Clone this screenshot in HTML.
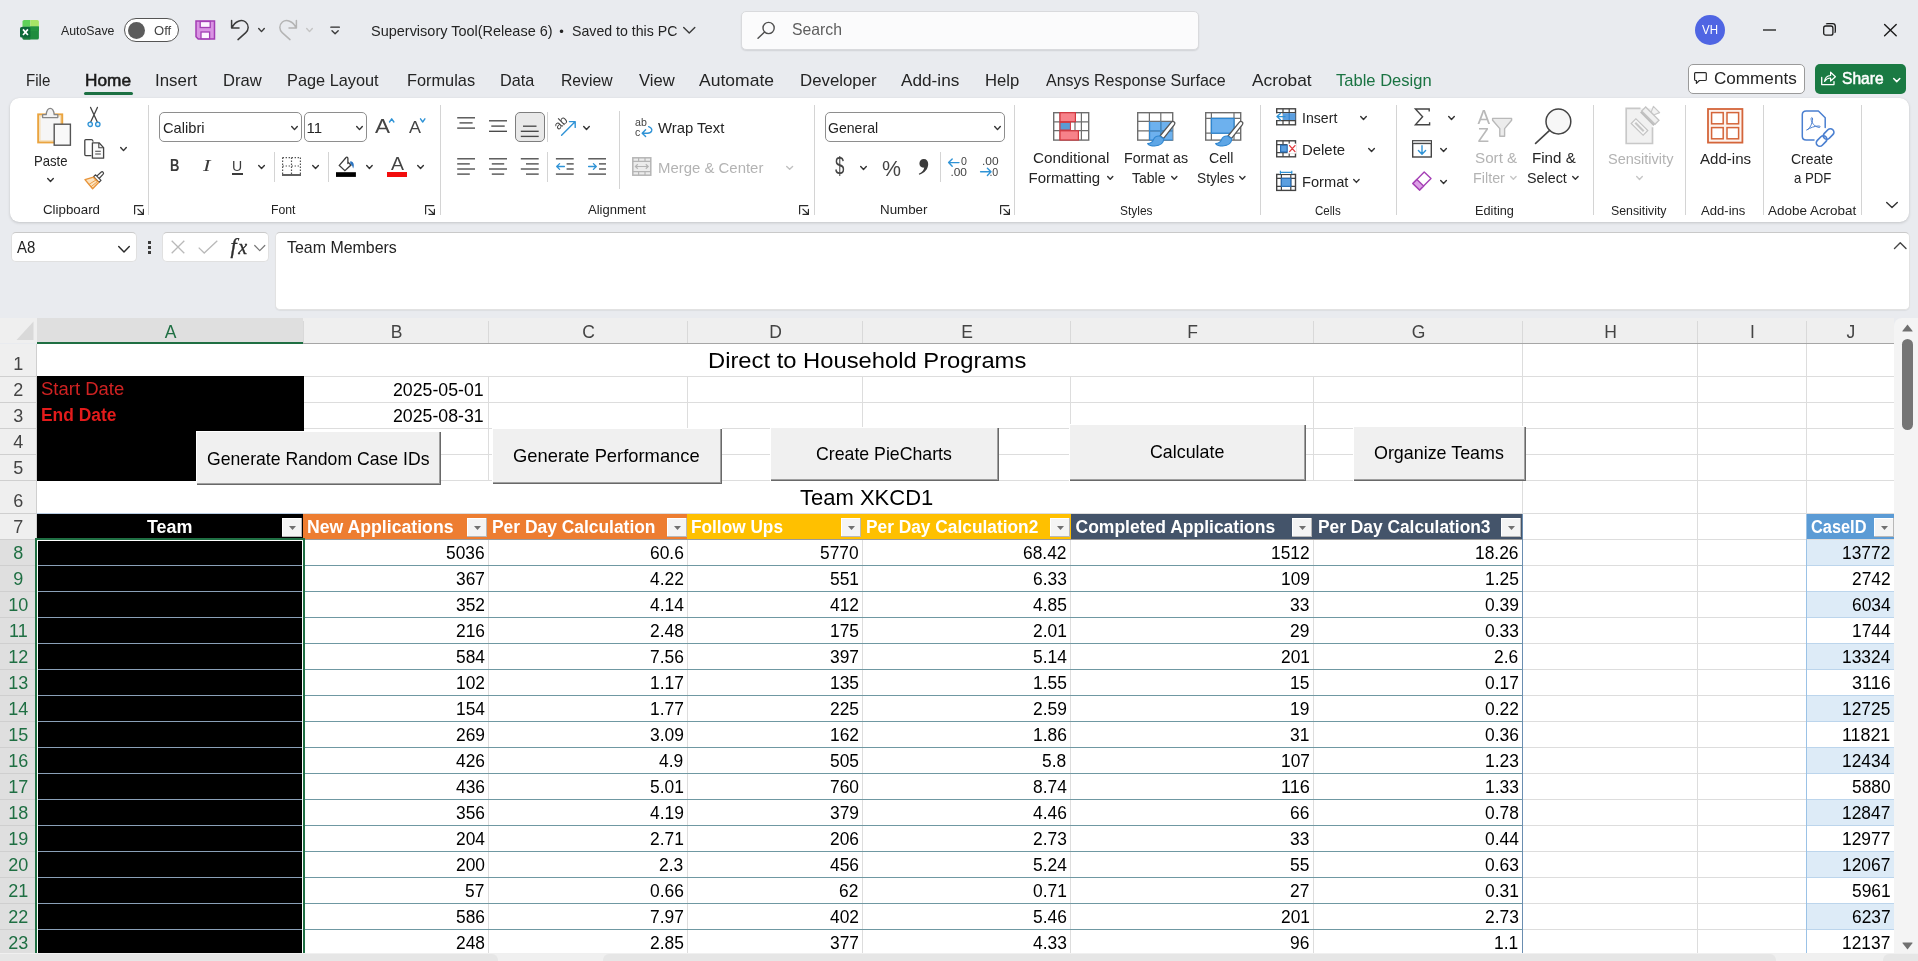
<!DOCTYPE html>
<html><head><meta charset="utf-8"><title>Excel</title>
<style>
html,body{margin:0;padding:0}
body{width:1918px;height:961px;overflow:hidden;position:relative;background:#e9ebef;font-family:"Liberation Sans",sans-serif}
div,span,svg{position:absolute}
span{white-space:pre;line-height:1;transform-origin:0 0}
svg{overflow:visible}
</style></head><body><div id="app" style="left:0;top:0;width:1918px;height:961px;will-change:transform">
<div style="left:0px;top:318px;width:1918px;height:643px;background:#e9ebef;"></div>
<div style="left:1894px;top:318px;width:30px;height:643px;background:#f4f4f4;border-radius:8px 0 0 0;"></div>
<div style="left:37px;top:344px;width:1857px;height:609px;background:#ffffff;"></div>
<div style="left:0px;top:318px;width:1894px;height:25px;background:#efefef;"></div>
<div style="left:37px;top:318px;width:266px;height:24px;background:#dfdfdf;"></div>
<div style="left:37px;top:343px;width:1857px;height:1px;background:#a6a6a6;"></div>
<div style="left:37px;top:342px;width:266px;height:2px;background:#1f6f43;"></div>
<svg style="left:16px;top:321px;" width="18" height="20" viewBox="0 0 18 20"><path d="M17.5 0.5 L17.5 19 L0.5 19 Z" fill="#d9d9d9"/></svg>
<div style="left:303px;top:321px;width:1px;height:22px;background:#d9d9d9;"></div>
<div style="left:488px;top:321px;width:1px;height:22px;background:#d9d9d9;"></div>
<div style="left:687px;top:321px;width:1px;height:22px;background:#d9d9d9;"></div>
<div style="left:862px;top:321px;width:1px;height:22px;background:#d9d9d9;"></div>
<div style="left:1070px;top:321px;width:1px;height:22px;background:#d9d9d9;"></div>
<div style="left:1313px;top:321px;width:1px;height:22px;background:#d9d9d9;"></div>
<div style="left:1522px;top:321px;width:1px;height:22px;background:#d9d9d9;"></div>
<div style="left:1697px;top:321px;width:1px;height:22px;background:#d9d9d9;"></div>
<div style="left:1806px;top:321px;width:1px;height:22px;background:#d9d9d9;"></div>
<span style="left:164.66px;top:324px;font-size:17.5px;color:#1f6f43;">A</span>
<span style="left:390.66px;top:324px;font-size:17.5px;color:#444444;">B</span>
<span style="left:582.18px;top:324px;font-size:17.5px;color:#444444;">C</span>
<span style="left:769.18px;top:324px;font-size:17.5px;color:#444444;">D</span>
<span style="left:961.16px;top:324px;font-size:17.5px;color:#444444;">E</span>
<span style="left:1187.15px;top:324px;font-size:17.5px;color:#444444;">F</span>
<span style="left:1411.69px;top:324px;font-size:17.5px;color:#444444;">G</span>
<span style="left:1604.18px;top:324px;font-size:17.5px;color:#444444;">H</span>
<span style="left:1750.06px;top:324px;font-size:17.5px;color:#444444;">I</span>
<span style="left:1846.62px;top:324px;font-size:17.5px;color:#444444;">J</span>
<div style="left:0px;top:344px;width:36px;height:609px;background:#efefef;"></div>
<div style="left:0px;top:540px;width:36px;height:413px;background:#dfdfdf;"></div>
<div style="left:36px;top:344px;width:1px;height:609px;background:#cfcfcf;"></div>
<div style="left:37px;top:376px;width:1857px;height:1px;background:#dddddd;"></div>
<div style="left:37px;top:402px;width:1857px;height:1px;background:#dddddd;"></div>
<div style="left:37px;top:428px;width:1857px;height:1px;background:#dddddd;"></div>
<div style="left:37px;top:454px;width:1857px;height:1px;background:#dddddd;"></div>
<div style="left:37px;top:480px;width:1857px;height:1px;background:#dddddd;"></div>
<div style="left:37px;top:513px;width:1857px;height:1px;background:#dddddd;"></div>
<div style="left:37px;top:539px;width:1857px;height:1px;background:#dddddd;"></div>
<div style="left:37px;top:565px;width:1857px;height:1px;background:#dddddd;"></div>
<div style="left:37px;top:591px;width:1857px;height:1px;background:#dddddd;"></div>
<div style="left:37px;top:617px;width:1857px;height:1px;background:#dddddd;"></div>
<div style="left:37px;top:643px;width:1857px;height:1px;background:#dddddd;"></div>
<div style="left:37px;top:669px;width:1857px;height:1px;background:#dddddd;"></div>
<div style="left:37px;top:695px;width:1857px;height:1px;background:#dddddd;"></div>
<div style="left:37px;top:721px;width:1857px;height:1px;background:#dddddd;"></div>
<div style="left:37px;top:747px;width:1857px;height:1px;background:#dddddd;"></div>
<div style="left:37px;top:773px;width:1857px;height:1px;background:#dddddd;"></div>
<div style="left:37px;top:799px;width:1857px;height:1px;background:#dddddd;"></div>
<div style="left:37px;top:825px;width:1857px;height:1px;background:#dddddd;"></div>
<div style="left:37px;top:851px;width:1857px;height:1px;background:#dddddd;"></div>
<div style="left:37px;top:877px;width:1857px;height:1px;background:#dddddd;"></div>
<div style="left:37px;top:903px;width:1857px;height:1px;background:#dddddd;"></div>
<div style="left:37px;top:929px;width:1857px;height:1px;background:#dddddd;"></div>
<div style="left:303px;top:344px;width:1px;height:609px;background:#dddddd;"></div>
<div style="left:488px;top:344px;width:1px;height:609px;background:#dddddd;"></div>
<div style="left:687px;top:344px;width:1px;height:609px;background:#dddddd;"></div>
<div style="left:862px;top:344px;width:1px;height:609px;background:#dddddd;"></div>
<div style="left:1070px;top:344px;width:1px;height:609px;background:#dddddd;"></div>
<div style="left:1313px;top:344px;width:1px;height:609px;background:#dddddd;"></div>
<div style="left:1522px;top:344px;width:1px;height:609px;background:#dddddd;"></div>
<div style="left:1697px;top:344px;width:1px;height:609px;background:#dddddd;"></div>
<div style="left:1806px;top:344px;width:1px;height:609px;background:#dddddd;"></div>
<div style="left:0px;top:376px;width:36px;height:1px;background:#cfcfcf;"></div>
<span style="left:13.29px;top:355px;font-size:18px;color:#444444;">1</span>
<div style="left:0px;top:402px;width:36px;height:1px;background:#cfcfcf;"></div>
<span style="left:13.29px;top:381px;font-size:18px;color:#444444;">2</span>
<div style="left:0px;top:428px;width:36px;height:1px;background:#cfcfcf;"></div>
<span style="left:13.29px;top:407px;font-size:18px;color:#444444;">3</span>
<div style="left:0px;top:454px;width:36px;height:1px;background:#cfcfcf;"></div>
<span style="left:13.29px;top:433px;font-size:18px;color:#444444;">4</span>
<div style="left:0px;top:480px;width:36px;height:1px;background:#cfcfcf;"></div>
<span style="left:13.29px;top:459px;font-size:18px;color:#444444;">5</span>
<div style="left:0px;top:513px;width:36px;height:1px;background:#cfcfcf;"></div>
<span style="left:13.29px;top:492px;font-size:18px;color:#444444;">6</span>
<div style="left:0px;top:539px;width:36px;height:1px;background:#cfcfcf;"></div>
<span style="left:13.29px;top:518px;font-size:18px;color:#444444;">7</span>
<div style="left:0px;top:565px;width:36px;height:1px;background:#cfcfcf;"></div>
<span style="left:13.29px;top:544px;font-size:18px;color:#1f6f43;">8</span>
<div style="left:0px;top:591px;width:36px;height:1px;background:#cfcfcf;"></div>
<span style="left:13.29px;top:570px;font-size:18px;color:#1f6f43;">9</span>
<div style="left:0px;top:617px;width:36px;height:1px;background:#cfcfcf;"></div>
<span style="left:8.28px;top:596px;font-size:18px;color:#1f6f43;">10</span>
<div style="left:0px;top:643px;width:36px;height:1px;background:#cfcfcf;"></div>
<span style="left:8.96px;top:622px;font-size:18px;color:#1f6f43;">11</span>
<div style="left:0px;top:669px;width:36px;height:1px;background:#cfcfcf;"></div>
<span style="left:8.28px;top:648px;font-size:18px;color:#1f6f43;">12</span>
<div style="left:0px;top:695px;width:36px;height:1px;background:#cfcfcf;"></div>
<span style="left:8.28px;top:674px;font-size:18px;color:#1f6f43;">13</span>
<div style="left:0px;top:721px;width:36px;height:1px;background:#cfcfcf;"></div>
<span style="left:8.28px;top:700px;font-size:18px;color:#1f6f43;">14</span>
<div style="left:0px;top:747px;width:36px;height:1px;background:#cfcfcf;"></div>
<span style="left:8.28px;top:726px;font-size:18px;color:#1f6f43;">15</span>
<div style="left:0px;top:773px;width:36px;height:1px;background:#cfcfcf;"></div>
<span style="left:8.28px;top:752px;font-size:18px;color:#1f6f43;">16</span>
<div style="left:0px;top:799px;width:36px;height:1px;background:#cfcfcf;"></div>
<span style="left:8.28px;top:778px;font-size:18px;color:#1f6f43;">17</span>
<div style="left:0px;top:825px;width:36px;height:1px;background:#cfcfcf;"></div>
<span style="left:8.28px;top:804px;font-size:18px;color:#1f6f43;">18</span>
<div style="left:0px;top:851px;width:36px;height:1px;background:#cfcfcf;"></div>
<span style="left:8.28px;top:830px;font-size:18px;color:#1f6f43;">19</span>
<div style="left:0px;top:877px;width:36px;height:1px;background:#cfcfcf;"></div>
<span style="left:8.28px;top:856px;font-size:18px;color:#1f6f43;">20</span>
<div style="left:0px;top:903px;width:36px;height:1px;background:#cfcfcf;"></div>
<span style="left:8.28px;top:882px;font-size:18px;color:#1f6f43;">21</span>
<div style="left:0px;top:929px;width:36px;height:1px;background:#cfcfcf;"></div>
<span style="left:8.28px;top:908px;font-size:18px;color:#1f6f43;">22</span>
<span style="left:8.28px;top:934px;font-size:18px;color:#1f6f43;">23</span>
<div style="left:37px;top:344px;width:1485px;height:32px;background:#ffffff;"></div>
<span style="left:707.70px;top:349px;font-size:22.7px;color:#000;transform:scaleX(1.0474);">Direct to Household Programs</span>
<div style="left:37px;top:481px;width:1485px;height:32px;background:#ffffff;"></div>
<span style="left:800.00px;top:486px;font-size:22.7px;color:#000;transform:scaleX(0.9699);">Team XKCD1</span>
<div style="left:37px;top:376px;width:267px;height:105px;background:#000000;"></div>
<span style="left:40.50px;top:381px;font-size:17.5px;color:#cf2222;transform:scaleX(1.0559);">Start Date</span>
<span style="left:41.30px;top:407px;font-size:17.5px;color:#e31b1b;font-weight:700;transform:scaleX(0.9939);">End Date</span>
<span style="left:393.30px;top:382px;font-size:17.5px;color:#000;transform:scaleX(1.0131);">2025-05-01</span>
<span style="left:393.30px;top:408px;font-size:17.5px;color:#000;transform:scaleX(1.0131);">2025-08-31</span>
<div style="left:37px;top:513px;width:266px;height:1px;background:#b9cde3;"></div>
<div style="left:37px;top:514px;width:266px;height:25px;background:#000000;"></div>
<div style="left:303px;top:514px;width:384px;height:25px;background:#ed7d31;"></div>
<div style="left:687px;top:514px;width:384px;height:25px;background:#ffc000;"></div>
<div style="left:1071px;top:514px;width:452px;height:25px;background:#44546a;"></div>
<div style="left:1807px;top:514px;width:87px;height:25px;background:#5b9bd5;"></div>
<span style="left:147.00px;top:519px;font-size:17.5px;color:#fff;font-weight:700;transform:scaleX(1.0243);">Team</span>
<span style="left:307.00px;top:519px;font-size:17.5px;color:#fff;font-weight:700;transform:scaleX(1.0088);">New Applications</span>
<span style="left:492.00px;top:519px;font-size:17.5px;color:#fff;font-weight:700;transform:scaleX(0.9947);">Per Day Calculation</span>
<span style="left:691.00px;top:519px;font-size:17.5px;color:#fff;font-weight:700;transform:scaleX(0.9858);">Follow Ups</span>
<span style="left:865.70px;top:519px;font-size:17.5px;color:#fff;font-weight:700;transform:scaleX(0.9896);">Per Day Calculation2</span>
<span style="left:1075.50px;top:519px;font-size:17.5px;color:#fff;font-weight:700;">Completed Applications</span>
<span style="left:1317.50px;top:519px;font-size:17.5px;color:#fff;font-weight:700;transform:scaleX(0.9908);">Per Day Calculation3</span>
<span style="left:1810.50px;top:519px;font-size:17.5px;color:#fff;font-weight:700;transform:scaleX(0.9352);">CaseID</span>
<div style="left:282px;top:518px;width:20px;height:19px;background:#f4f4f4;box-shadow:inset -1px -1px 0 #b8b8b8, inset 1px 1px 0 #ffffff;"></div>
<svg style="left:288.5px;top:525.5px;" width="7" height="4" viewBox="0 0 7 4"><path d="M0 0 L7 0 L3.5 4 Z" fill="#707070"/></svg>
<div style="left:467px;top:518px;width:20px;height:19px;background:#f4f4f4;box-shadow:inset -1px -1px 0 #b8b8b8, inset 1px 1px 0 #ffffff;"></div>
<svg style="left:473.5px;top:525.5px;" width="7" height="4" viewBox="0 0 7 4"><path d="M0 0 L7 0 L3.5 4 Z" fill="#707070"/></svg>
<div style="left:667px;top:518px;width:20px;height:19px;background:#f4f4f4;box-shadow:inset -1px -1px 0 #b8b8b8, inset 1px 1px 0 #ffffff;"></div>
<svg style="left:673.5px;top:525.5px;" width="7" height="4" viewBox="0 0 7 4"><path d="M0 0 L7 0 L3.5 4 Z" fill="#707070"/></svg>
<div style="left:841px;top:518px;width:20px;height:19px;background:#f4f4f4;box-shadow:inset -1px -1px 0 #b8b8b8, inset 1px 1px 0 #ffffff;"></div>
<svg style="left:847.5px;top:525.5px;" width="7" height="4" viewBox="0 0 7 4"><path d="M0 0 L7 0 L3.5 4 Z" fill="#707070"/></svg>
<div style="left:1050px;top:518px;width:20px;height:19px;background:#f4f4f4;box-shadow:inset -1px -1px 0 #b8b8b8, inset 1px 1px 0 #ffffff;"></div>
<svg style="left:1056.5px;top:525.5px;" width="7" height="4" viewBox="0 0 7 4"><path d="M0 0 L7 0 L3.5 4 Z" fill="#707070"/></svg>
<div style="left:1292px;top:518px;width:20px;height:19px;background:#f4f4f4;box-shadow:inset -1px -1px 0 #b8b8b8, inset 1px 1px 0 #ffffff;"></div>
<svg style="left:1298.5px;top:525.5px;" width="7" height="4" viewBox="0 0 7 4"><path d="M0 0 L7 0 L3.5 4 Z" fill="#707070"/></svg>
<div style="left:1501px;top:518px;width:20px;height:19px;background:#f4f4f4;box-shadow:inset -1px -1px 0 #b8b8b8, inset 1px 1px 0 #ffffff;"></div>
<svg style="left:1507.5px;top:525.5px;" width="7" height="4" viewBox="0 0 7 4"><path d="M0 0 L7 0 L3.5 4 Z" fill="#707070"/></svg>
<div style="left:1874px;top:518px;width:20px;height:19px;background:#f4f4f4;box-shadow:inset -1px -1px 0 #b8b8b8, inset 1px 1px 0 #ffffff;"></div>
<svg style="left:1880.5px;top:525.5px;" width="7" height="4" viewBox="0 0 7 4"><path d="M0 0 L7 0 L3.5 4 Z" fill="#707070"/></svg>
<div style="left:1807px;top:540px;width:87px;height:25px;background:#ddebf7;"></div>
<div style="left:1807px;top:592px;width:87px;height:25px;background:#ddebf7;"></div>
<div style="left:1807px;top:644px;width:87px;height:25px;background:#ddebf7;"></div>
<div style="left:1807px;top:696px;width:87px;height:25px;background:#ddebf7;"></div>
<div style="left:1807px;top:748px;width:87px;height:25px;background:#ddebf7;"></div>
<div style="left:1807px;top:800px;width:87px;height:25px;background:#ddebf7;"></div>
<div style="left:1807px;top:852px;width:87px;height:25px;background:#ddebf7;"></div>
<div style="left:1807px;top:904px;width:87px;height:25px;background:#ddebf7;"></div>
<div style="left:37px;top:540px;width:266px;height:413px;background:#000000;"></div>
<div style="left:304px;top:565px;width:1218px;height:1px;background:#6f98a2;"></div>
<div style="left:37px;top:565px;width:266px;height:1px;background:#8aa0b8;"></div>
<div style="left:1807px;top:565px;width:87px;height:1px;background:#bcd5ec;"></div>
<div style="left:304px;top:591px;width:1218px;height:1px;background:#6f98a2;"></div>
<div style="left:37px;top:591px;width:266px;height:1px;background:#8aa0b8;"></div>
<div style="left:1807px;top:591px;width:87px;height:1px;background:#bcd5ec;"></div>
<div style="left:304px;top:617px;width:1218px;height:1px;background:#6f98a2;"></div>
<div style="left:37px;top:617px;width:266px;height:1px;background:#8aa0b8;"></div>
<div style="left:1807px;top:617px;width:87px;height:1px;background:#bcd5ec;"></div>
<div style="left:304px;top:643px;width:1218px;height:1px;background:#6f98a2;"></div>
<div style="left:37px;top:643px;width:266px;height:1px;background:#8aa0b8;"></div>
<div style="left:1807px;top:643px;width:87px;height:1px;background:#bcd5ec;"></div>
<div style="left:304px;top:669px;width:1218px;height:1px;background:#6f98a2;"></div>
<div style="left:37px;top:669px;width:266px;height:1px;background:#8aa0b8;"></div>
<div style="left:1807px;top:669px;width:87px;height:1px;background:#bcd5ec;"></div>
<div style="left:304px;top:695px;width:1218px;height:1px;background:#6f98a2;"></div>
<div style="left:37px;top:695px;width:266px;height:1px;background:#8aa0b8;"></div>
<div style="left:1807px;top:695px;width:87px;height:1px;background:#bcd5ec;"></div>
<div style="left:304px;top:721px;width:1218px;height:1px;background:#6f98a2;"></div>
<div style="left:37px;top:721px;width:266px;height:1px;background:#8aa0b8;"></div>
<div style="left:1807px;top:721px;width:87px;height:1px;background:#bcd5ec;"></div>
<div style="left:304px;top:747px;width:1218px;height:1px;background:#6f98a2;"></div>
<div style="left:37px;top:747px;width:266px;height:1px;background:#8aa0b8;"></div>
<div style="left:1807px;top:747px;width:87px;height:1px;background:#bcd5ec;"></div>
<div style="left:304px;top:773px;width:1218px;height:1px;background:#6f98a2;"></div>
<div style="left:37px;top:773px;width:266px;height:1px;background:#8aa0b8;"></div>
<div style="left:1807px;top:773px;width:87px;height:1px;background:#bcd5ec;"></div>
<div style="left:304px;top:799px;width:1218px;height:1px;background:#6f98a2;"></div>
<div style="left:37px;top:799px;width:266px;height:1px;background:#8aa0b8;"></div>
<div style="left:1807px;top:799px;width:87px;height:1px;background:#bcd5ec;"></div>
<div style="left:304px;top:825px;width:1218px;height:1px;background:#6f98a2;"></div>
<div style="left:37px;top:825px;width:266px;height:1px;background:#8aa0b8;"></div>
<div style="left:1807px;top:825px;width:87px;height:1px;background:#bcd5ec;"></div>
<div style="left:304px;top:851px;width:1218px;height:1px;background:#6f98a2;"></div>
<div style="left:37px;top:851px;width:266px;height:1px;background:#8aa0b8;"></div>
<div style="left:1807px;top:851px;width:87px;height:1px;background:#bcd5ec;"></div>
<div style="left:304px;top:877px;width:1218px;height:1px;background:#6f98a2;"></div>
<div style="left:37px;top:877px;width:266px;height:1px;background:#8aa0b8;"></div>
<div style="left:1807px;top:877px;width:87px;height:1px;background:#bcd5ec;"></div>
<div style="left:304px;top:903px;width:1218px;height:1px;background:#6f98a2;"></div>
<div style="left:37px;top:903px;width:266px;height:1px;background:#8aa0b8;"></div>
<div style="left:1807px;top:903px;width:87px;height:1px;background:#bcd5ec;"></div>
<div style="left:304px;top:929px;width:1218px;height:1px;background:#6f98a2;"></div>
<div style="left:37px;top:929px;width:266px;height:1px;background:#8aa0b8;"></div>
<div style="left:1807px;top:929px;width:87px;height:1px;background:#bcd5ec;"></div>
<div style="left:1522px;top:514px;width:1px;height:439px;background:#6a8db0;"></div>
<div style="left:1806px;top:514px;width:1px;height:439px;background:#9bc2e6;"></div>
<div style="left:304px;top:539px;width:1218px;height:1px;background:#9a9a9a;"></div>
<span style="left:445.86px;top:545px;font-size:17.5px;color:#000;transform:scaleX(0.9924);">5036</span>
<span style="left:649.62px;top:545px;font-size:17.5px;color:#000;transform:scaleX(0.9946);">60.6</span>
<span style="left:819.86px;top:545px;font-size:17.5px;color:#000;transform:scaleX(0.9924);">5770</span>
<span style="left:1022.96px;top:545px;font-size:17.5px;color:#000;transform:scaleX(0.9941);">68.42</span>
<span style="left:1270.86px;top:545px;font-size:17.5px;color:#000;transform:scaleX(0.9924);">1512</span>
<span style="left:1474.96px;top:545px;font-size:17.5px;color:#000;transform:scaleX(0.9941);">18.26</span>
<span style="left:1842.20px;top:545px;font-size:17.5px;color:#000;transform:scaleX(0.9924);">13772</span>
<span style="left:455.52px;top:571px;font-size:17.5px;color:#000;transform:scaleX(0.9924);">367</span>
<span style="left:649.62px;top:571px;font-size:17.5px;color:#000;transform:scaleX(0.9946);">4.22</span>
<span style="left:829.52px;top:571px;font-size:17.5px;color:#000;transform:scaleX(0.9924);">551</span>
<span style="left:1032.62px;top:571px;font-size:17.5px;color:#000;transform:scaleX(0.9946);">6.33</span>
<span style="left:1280.52px;top:571px;font-size:17.5px;color:#000;transform:scaleX(0.9924);">109</span>
<span style="left:1484.62px;top:571px;font-size:17.5px;color:#000;transform:scaleX(0.9946);">1.25</span>
<span style="left:1851.86px;top:571px;font-size:17.5px;color:#000;transform:scaleX(0.9924);">2742</span>
<span style="left:455.52px;top:597px;font-size:17.5px;color:#000;transform:scaleX(0.9924);">352</span>
<span style="left:649.62px;top:597px;font-size:17.5px;color:#000;transform:scaleX(0.9946);">4.14</span>
<span style="left:829.52px;top:597px;font-size:17.5px;color:#000;transform:scaleX(0.9924);">412</span>
<span style="left:1032.62px;top:597px;font-size:17.5px;color:#000;transform:scaleX(0.9946);">4.85</span>
<span style="left:1290.18px;top:597px;font-size:17.5px;color:#000;transform:scaleX(0.9924);">33</span>
<span style="left:1484.62px;top:597px;font-size:17.5px;color:#000;transform:scaleX(0.9946);">0.39</span>
<span style="left:1851.86px;top:597px;font-size:17.5px;color:#000;transform:scaleX(0.9924);">6034</span>
<span style="left:455.52px;top:623px;font-size:17.5px;color:#000;transform:scaleX(0.9924);">216</span>
<span style="left:649.62px;top:623px;font-size:17.5px;color:#000;transform:scaleX(0.9946);">2.48</span>
<span style="left:829.52px;top:623px;font-size:17.5px;color:#000;transform:scaleX(0.9924);">175</span>
<span style="left:1032.62px;top:623px;font-size:17.5px;color:#000;transform:scaleX(0.9946);">2.01</span>
<span style="left:1290.18px;top:623px;font-size:17.5px;color:#000;transform:scaleX(0.9924);">29</span>
<span style="left:1484.62px;top:623px;font-size:17.5px;color:#000;transform:scaleX(0.9946);">0.33</span>
<span style="left:1851.86px;top:623px;font-size:17.5px;color:#000;transform:scaleX(0.9924);">1744</span>
<span style="left:455.52px;top:649px;font-size:17.5px;color:#000;transform:scaleX(0.9924);">584</span>
<span style="left:649.62px;top:649px;font-size:17.5px;color:#000;transform:scaleX(0.9946);">7.56</span>
<span style="left:829.52px;top:649px;font-size:17.5px;color:#000;transform:scaleX(0.9924);">397</span>
<span style="left:1032.62px;top:649px;font-size:17.5px;color:#000;transform:scaleX(0.9946);">5.14</span>
<span style="left:1280.52px;top:649px;font-size:17.5px;color:#000;transform:scaleX(0.9924);">201</span>
<span style="left:1494.28px;top:649px;font-size:17.5px;color:#000;transform:scaleX(0.9956);">2.6</span>
<span style="left:1842.20px;top:649px;font-size:17.5px;color:#000;transform:scaleX(0.9924);">13324</span>
<span style="left:455.52px;top:675px;font-size:17.5px;color:#000;transform:scaleX(0.9924);">102</span>
<span style="left:649.62px;top:675px;font-size:17.5px;color:#000;transform:scaleX(0.9946);">1.17</span>
<span style="left:829.52px;top:675px;font-size:17.5px;color:#000;transform:scaleX(0.9924);">135</span>
<span style="left:1032.62px;top:675px;font-size:17.5px;color:#000;transform:scaleX(0.9946);">1.55</span>
<span style="left:1290.18px;top:675px;font-size:17.5px;color:#000;transform:scaleX(0.9924);">15</span>
<span style="left:1484.62px;top:675px;font-size:17.5px;color:#000;transform:scaleX(0.9946);">0.17</span>
<span style="left:1851.86px;top:675px;font-size:17.5px;color:#000;transform:scaleX(1.0266);">3116</span>
<span style="left:455.52px;top:701px;font-size:17.5px;color:#000;transform:scaleX(0.9924);">154</span>
<span style="left:649.62px;top:701px;font-size:17.5px;color:#000;transform:scaleX(0.9946);">1.77</span>
<span style="left:829.52px;top:701px;font-size:17.5px;color:#000;transform:scaleX(0.9924);">225</span>
<span style="left:1032.62px;top:701px;font-size:17.5px;color:#000;transform:scaleX(0.9946);">2.59</span>
<span style="left:1290.18px;top:701px;font-size:17.5px;color:#000;transform:scaleX(0.9924);">19</span>
<span style="left:1484.62px;top:701px;font-size:17.5px;color:#000;transform:scaleX(0.9946);">0.22</span>
<span style="left:1842.20px;top:701px;font-size:17.5px;color:#000;transform:scaleX(0.9924);">12725</span>
<span style="left:455.52px;top:727px;font-size:17.5px;color:#000;transform:scaleX(0.9924);">269</span>
<span style="left:649.62px;top:727px;font-size:17.5px;color:#000;transform:scaleX(0.9946);">3.09</span>
<span style="left:829.52px;top:727px;font-size:17.5px;color:#000;transform:scaleX(0.9924);">162</span>
<span style="left:1032.62px;top:727px;font-size:17.5px;color:#000;transform:scaleX(0.9946);">1.86</span>
<span style="left:1290.18px;top:727px;font-size:17.5px;color:#000;transform:scaleX(0.9924);">31</span>
<span style="left:1484.62px;top:727px;font-size:17.5px;color:#000;transform:scaleX(0.9946);">0.36</span>
<span style="left:1842.20px;top:727px;font-size:17.5px;color:#000;transform:scaleX(1.0195);">11821</span>
<span style="left:455.52px;top:753px;font-size:17.5px;color:#000;transform:scaleX(0.9924);">426</span>
<span style="left:659.28px;top:753px;font-size:17.5px;color:#000;transform:scaleX(0.9956);">4.9</span>
<span style="left:829.52px;top:753px;font-size:17.5px;color:#000;transform:scaleX(0.9924);">505</span>
<span style="left:1042.28px;top:753px;font-size:17.5px;color:#000;transform:scaleX(0.9956);">5.8</span>
<span style="left:1280.52px;top:753px;font-size:17.5px;color:#000;transform:scaleX(0.9924);">107</span>
<span style="left:1484.62px;top:753px;font-size:17.5px;color:#000;transform:scaleX(0.9946);">1.23</span>
<span style="left:1842.20px;top:753px;font-size:17.5px;color:#000;transform:scaleX(0.9924);">12434</span>
<span style="left:455.52px;top:779px;font-size:17.5px;color:#000;transform:scaleX(0.9924);">436</span>
<span style="left:649.62px;top:779px;font-size:17.5px;color:#000;transform:scaleX(0.9946);">5.01</span>
<span style="left:829.52px;top:779px;font-size:17.5px;color:#000;transform:scaleX(0.9924);">760</span>
<span style="left:1032.62px;top:779px;font-size:17.5px;color:#000;transform:scaleX(0.9946);">8.74</span>
<span style="left:1280.52px;top:779px;font-size:17.5px;color:#000;transform:scaleX(1.0385);">116</span>
<span style="left:1484.62px;top:779px;font-size:17.5px;color:#000;transform:scaleX(0.9946);">1.33</span>
<span style="left:1851.86px;top:779px;font-size:17.5px;color:#000;transform:scaleX(0.9924);">5880</span>
<span style="left:455.52px;top:805px;font-size:17.5px;color:#000;transform:scaleX(0.9924);">356</span>
<span style="left:649.62px;top:805px;font-size:17.5px;color:#000;transform:scaleX(0.9946);">4.19</span>
<span style="left:829.52px;top:805px;font-size:17.5px;color:#000;transform:scaleX(0.9924);">379</span>
<span style="left:1032.62px;top:805px;font-size:17.5px;color:#000;transform:scaleX(0.9946);">4.46</span>
<span style="left:1290.18px;top:805px;font-size:17.5px;color:#000;transform:scaleX(0.9924);">66</span>
<span style="left:1484.62px;top:805px;font-size:17.5px;color:#000;transform:scaleX(0.9946);">0.78</span>
<span style="left:1842.20px;top:805px;font-size:17.5px;color:#000;transform:scaleX(0.9924);">12847</span>
<span style="left:455.52px;top:831px;font-size:17.5px;color:#000;transform:scaleX(0.9924);">204</span>
<span style="left:649.62px;top:831px;font-size:17.5px;color:#000;transform:scaleX(0.9946);">2.71</span>
<span style="left:829.52px;top:831px;font-size:17.5px;color:#000;transform:scaleX(0.9924);">206</span>
<span style="left:1032.62px;top:831px;font-size:17.5px;color:#000;transform:scaleX(0.9946);">2.73</span>
<span style="left:1290.18px;top:831px;font-size:17.5px;color:#000;transform:scaleX(0.9924);">33</span>
<span style="left:1484.62px;top:831px;font-size:17.5px;color:#000;transform:scaleX(0.9946);">0.44</span>
<span style="left:1842.20px;top:831px;font-size:17.5px;color:#000;transform:scaleX(0.9924);">12977</span>
<span style="left:455.52px;top:857px;font-size:17.5px;color:#000;transform:scaleX(0.9924);">200</span>
<span style="left:659.28px;top:857px;font-size:17.5px;color:#000;transform:scaleX(0.9956);">2.3</span>
<span style="left:829.52px;top:857px;font-size:17.5px;color:#000;transform:scaleX(0.9924);">456</span>
<span style="left:1032.62px;top:857px;font-size:17.5px;color:#000;transform:scaleX(0.9946);">5.24</span>
<span style="left:1290.18px;top:857px;font-size:17.5px;color:#000;transform:scaleX(0.9924);">55</span>
<span style="left:1484.62px;top:857px;font-size:17.5px;color:#000;transform:scaleX(0.9946);">0.63</span>
<span style="left:1842.20px;top:857px;font-size:17.5px;color:#000;transform:scaleX(0.9924);">12067</span>
<span style="left:465.18px;top:883px;font-size:17.5px;color:#000;transform:scaleX(0.9924);">57</span>
<span style="left:649.62px;top:883px;font-size:17.5px;color:#000;transform:scaleX(0.9946);">0.66</span>
<span style="left:839.18px;top:883px;font-size:17.5px;color:#000;transform:scaleX(0.9924);">62</span>
<span style="left:1032.62px;top:883px;font-size:17.5px;color:#000;transform:scaleX(0.9946);">0.71</span>
<span style="left:1290.18px;top:883px;font-size:17.5px;color:#000;transform:scaleX(0.9924);">27</span>
<span style="left:1484.62px;top:883px;font-size:17.5px;color:#000;transform:scaleX(0.9946);">0.31</span>
<span style="left:1851.86px;top:883px;font-size:17.5px;color:#000;transform:scaleX(0.9924);">5961</span>
<span style="left:455.52px;top:909px;font-size:17.5px;color:#000;transform:scaleX(0.9924);">586</span>
<span style="left:649.62px;top:909px;font-size:17.5px;color:#000;transform:scaleX(0.9946);">7.97</span>
<span style="left:829.52px;top:909px;font-size:17.5px;color:#000;transform:scaleX(0.9924);">402</span>
<span style="left:1032.62px;top:909px;font-size:17.5px;color:#000;transform:scaleX(0.9946);">5.46</span>
<span style="left:1280.52px;top:909px;font-size:17.5px;color:#000;transform:scaleX(0.9924);">201</span>
<span style="left:1484.62px;top:909px;font-size:17.5px;color:#000;transform:scaleX(0.9946);">2.73</span>
<span style="left:1851.86px;top:909px;font-size:17.5px;color:#000;transform:scaleX(0.9924);">6237</span>
<span style="left:455.52px;top:935px;font-size:17.5px;color:#000;transform:scaleX(0.9924);">248</span>
<span style="left:649.62px;top:935px;font-size:17.5px;color:#000;transform:scaleX(0.9946);">2.85</span>
<span style="left:829.52px;top:935px;font-size:17.5px;color:#000;transform:scaleX(0.9924);">377</span>
<span style="left:1032.62px;top:935px;font-size:17.5px;color:#000;transform:scaleX(0.9946);">4.33</span>
<span style="left:1290.18px;top:935px;font-size:17.5px;color:#000;transform:scaleX(0.9924);">96</span>
<span style="left:1494.28px;top:935px;font-size:17.5px;color:#000;transform:scaleX(0.9956);">1.1</span>
<span style="left:1842.20px;top:935px;font-size:17.5px;color:#000;transform:scaleX(0.9924);">12137</span>
<div style="left:35px;top:538px;width:270px;height:420px;border:2px solid #1f6f43;box-sizing:border-box;"></div>
<div style="left:37px;top:540px;width:266px;height:416px;border:1px solid #fff;box-sizing:border-box;"></div>
<div style="left:196px;top:431px;width:245px;height:54px;background:#f0f0f0;box-shadow:inset 1px 1px 0 #ffffff, inset -1px -1px 0 #696969, inset -2px -2px 0 #a0a0a0;"></div>
<span style="left:207.00px;top:449px;font-size:19px;color:#000;transform:scaleX(0.9281);">Generate Random Case IDs</span>
<div style="left:492px;top:428px;width:230px;height:56px;background:#f0f0f0;box-shadow:inset 1px 1px 0 #ffffff, inset -1px -1px 0 #696969, inset -2px -2px 0 #a0a0a0;"></div>
<span style="left:513.30px;top:446px;font-size:19px;color:#000;transform:scaleX(0.9660);">Generate Performance</span>
<div style="left:770px;top:427px;width:229px;height:54px;background:#f0f0f0;box-shadow:inset 1px 1px 0 #ffffff, inset -1px -1px 0 #696969, inset -2px -2px 0 #a0a0a0;"></div>
<span style="left:815.80px;top:444px;font-size:19px;color:#000;transform:scaleX(0.9325);">Create PieCharts</span>
<div style="left:1069px;top:424px;width:237px;height:57px;background:#f0f0f0;box-shadow:inset 1px 1px 0 #ffffff, inset -1px -1px 0 #696969, inset -2px -2px 0 #a0a0a0;"></div>
<span style="left:1149.70px;top:442px;font-size:19px;color:#000;transform:scaleX(0.9379);">Calculate</span>
<div style="left:1353px;top:426px;width:173px;height:55px;background:#f0f0f0;box-shadow:inset 1px 1px 0 #ffffff, inset -1px -1px 0 #696969, inset -2px -2px 0 #a0a0a0;"></div>
<span style="left:1373.80px;top:443px;font-size:19px;color:#000;transform:scaleX(0.9413);">Organize Teams</span>
<svg style="left:1902px;top:324px;" width="11" height="8" viewBox="0 0 11 8"><path d="M5.5 0.5 L10.6 7 Q10.8 7.6 10 7.6 L1 7.6 Q0.2 7.6 0.4 7 Z" fill="#707070"/></svg>
<div style="left:1902px;top:339px;width:11px;height:91px;background:#757575;border-radius:5.5px;"></div>
<svg style="left:1902px;top:942px;" width="11" height="8" viewBox="0 0 11 8"><path d="M5.5 7.5 L10.6 1 Q10.8 0.4 10 0.4 L1 0.4 Q0.2 0.4 0.4 1 Z" fill="#707070"/></svg>
<div style="left:0px;top:953px;width:1918px;height:8px;background:#f0f0f0;"></div>
<div style="left:-8px;top:953.5px;width:506px;height:20px;background:#e6e6e6;border-radius:6px;"></div>
<div style="left:603px;top:953.5px;width:1173px;height:20px;background:#e6e6e6;border-radius:6px;"></div>
<div style="left:1883px;top:953.5px;width:50px;height:20px;background:#e6e6e6;border-radius:6px;"></div>
<svg style="left:20px;top:20px;" width="19" height="20" viewBox="0 0 19 20">
<path d="M2.5 6.8 V1.6 Q2.5 0 4.1 0 H10.3 V6.8 Z" fill="#5fd15a"/>
<path d="M10.3 0 H17.3 Q18.9 0 18.9 1.6 V6.8 H10.3 Z" fill="#a8e566"/>
<path d="M2.5 6.6 H18.9 V18 Q18.9 19.6 17.3 19.6 H4.1 Q2.5 19.6 2.5 18 Z" fill="#1f8c3d"/>
<path d="M10.3 6.6 H18.9 V11 H10.3 Z" fill="#23943f"/>
<path d="M2.5 15 H10.3 V19.6 H4.1 Q2.5 19.6 2.5 18 Z" fill="#18793a"/>
<rect x="0" y="6.9" width="10.3" height="10.6" rx="1.6" fill="#0d6838"/>
<path d="M3 9.4 L7.9 15 M7.9 9.4 L3 15" stroke="#fff" stroke-width="1.7"/></svg>
<span style="left:61.00px;top:24px;font-size:13px;color:#242424;transform:scaleX(0.9472);">AutoSave</span>
<div style="left:124px;top:17.5px;width:55px;height:24px;background:#fff;border:1px solid #555;border-radius:12.5px;box-sizing:border-box;"></div>
<div style="left:128px;top:21.5px;width:17px;height:17px;background:#5c5c5c;border-radius:9px;"></div>
<span style="left:153.50px;top:24px;font-size:13px;color:#444;transform:scaleX(1.0053);">Off</span>
<svg style="left:194.5px;top:20px;" width="21" height="20" viewBox="0 0 21 20"><path d="M1 1 H19.5 V19 H3.2 L1 16.8 Z" fill="#d993e3" stroke="#a23db4" stroke-width="1.5" stroke-linejoin="miter"/>
<rect x="5.2" y="1.5" width="10" height="6" fill="#fdf3ff" stroke="#a23db4" stroke-width="1.3"/>
<rect x="6" y="12" width="8.6" height="6.8" fill="#fdf3ff" stroke="#a23db4" stroke-width="1.3"/></svg>
<svg style="left:230px;top:18px;" width="20" height="23" viewBox="0 0 20 23"><path d="M1.6 2.6 V10 H9 M2 9.6 C5 3.2 11.5 0.8 15.6 4 C19.4 7.2 18.6 12 15.8 14.6 L8 21.6" fill="none" stroke="#3b3b3b" stroke-width="1.5" stroke-linecap="round" stroke-linejoin="round"/></svg>
<svg style="left:258px;top:28px;" width="7" height="4" viewBox="0 0 7 4"><path d="M0.7 0.5 L3.5 3.6 L6.3 0.5" fill="none" stroke="#3b3b3b" stroke-width="1.4" stroke-linecap="round" stroke-linejoin="round"/></svg>
<svg style="left:278px;top:18px;" width="20" height="23" viewBox="0 0 20 23"><path d="M18.4 2.6 V10 H11 M18 9.6 C15 3.2 8.5 0.8 4.4 4 C0.6 7.2 1.4 12 4.2 14.6 L12 21.6" fill="none" stroke="#b4b4b4" stroke-width="1.5" stroke-linecap="round" stroke-linejoin="round"/></svg>
<svg style="left:306px;top:28px;" width="7" height="4" viewBox="0 0 7 4"><path d="M0.7 0.5 L3.5 3.6 L6.3 0.5" fill="none" stroke="#c4c4c4" stroke-width="1.4" stroke-linecap="round" stroke-linejoin="round"/></svg>
<svg style="left:330px;top:26px;" width="10" height="10" viewBox="0 0 10 10"><path d="M0.8 1.2 H9.4" stroke="#2b2b2b" stroke-width="1.2" stroke-linecap="round"/><path d="M2 4.7 L5.1 7.8 L8.2 4.7" fill="none" stroke="#3b3b3b" stroke-width="1.4" stroke-linecap="round" stroke-linejoin="round"/></svg>
<span style="left:371.00px;top:23px;font-size:15px;color:#242424;transform:scaleX(0.9652);">Supervisory Tool(Release 6)</span>
<span style="left:559.30px;top:25px;font-size:13px;color:#242424;">•</span>
<span style="left:572.30px;top:23px;font-size:15px;color:#242424;transform:scaleX(0.9433);">Saved to this PC</span>
<svg style="left:683px;top:26.5px;" width="12.5" height="6.5" viewBox="0 0 12.5 6.5"><path d="M0.7 0.5 L6.25 6.1 L11.8 0.5" fill="none" stroke="#3b3b3b" stroke-width="1.4" stroke-linecap="round" stroke-linejoin="round"/></svg>
<div style="left:740.5px;top:10.5px;width:458px;height:39px;background:#fbfbfc;border:1px solid #d9dadd;border-radius:5px;box-sizing:border-box;box-shadow:0 1px 1.5px rgba(0,0,0,.10);"></div>
<svg style="left:757px;top:21px;" width="19" height="18" viewBox="0 0 19 18"><circle cx="11.6" cy="7" r="5.6" fill="none" stroke="#505050" stroke-width="1.4"/><path d="M7.6 11 L1 17.3" stroke="#505050" stroke-width="1.5" stroke-linecap="round"/></svg>
<span style="left:792.30px;top:21px;font-size:16.5px;color:#5e5e5e;transform:scaleX(0.9564);">Search</span>
<div style="left:1694.6px;top:15px;width:30px;height:30px;background:#4f65e3;border-radius:15px;"></div>
<span style="left:1701.70px;top:24px;font-size:12px;color:#fff;transform:scaleX(0.9597);">VH</span>
<svg style="left:1763.3px;top:28.6px;" width="13" height="2" viewBox="0 0 13 2"><path d="M0 1 H13" stroke="#1a1a1a" stroke-width="1.3"/></svg>
<svg style="left:1823.4px;top:23.2px;" width="13" height="13" viewBox="0 0 13 13"><rect x="0.7" y="3" width="9.2" height="9.2" rx="2" fill="none" stroke="#1a1a1a" stroke-width="1.3"/><path d="M3.2 1.2 Q3.6 0.6 4.8 0.6 H9.6 Q12.3 0.6 12.3 3.4 V8.2 Q12.3 9.4 11.6 9.8" fill="none" stroke="#1a1a1a" stroke-width="1.3"/></svg>
<svg style="left:1883.8px;top:23.8px;" width="13" height="12" viewBox="0 0 13 12"><path d="M0.6 0.4 L12.2 11.8 M12.2 0.4 L0.6 11.8" stroke="#1a1a1a" stroke-width="1.4" stroke-linecap="round"/></svg>
<span style="left:26.30px;top:72px;font-size:17px;color:#242424;transform:scaleX(0.8867);">File</span>
<span style="left:155.30px;top:72px;font-size:17px;color:#242424;transform:scaleX(0.9922);">Insert</span>
<span style="left:223.00px;top:72px;font-size:17px;color:#242424;transform:scaleX(0.9755);">Draw</span>
<span style="left:287.40px;top:72px;font-size:17px;color:#242424;transform:scaleX(0.9595);">Page Layout</span>
<span style="left:406.60px;top:72px;font-size:17px;color:#242424;transform:scaleX(0.9611);">Formulas</span>
<span style="left:499.50px;top:72px;font-size:17px;color:#242424;transform:scaleX(0.9548);">Data</span>
<span style="left:561.40px;top:72px;font-size:17px;color:#242424;transform:scaleX(0.9256);">Review</span>
<span style="left:639.20px;top:72px;font-size:17px;color:#242424;transform:scaleX(0.9768);">View</span>
<span style="left:699.30px;top:72px;font-size:17px;color:#242424;transform:scaleX(1.0307);">Automate</span>
<span style="left:800.00px;top:72px;font-size:17px;color:#242424;transform:scaleX(0.9897);">Developer</span>
<span style="left:901.00px;top:72px;font-size:17px;color:#242424;transform:scaleX(1.0114);">Add-ins</span>
<span style="left:985.00px;top:72px;font-size:17px;color:#242424;transform:scaleX(0.9809);">Help</span>
<span style="left:1046.00px;top:72px;font-size:17px;color:#242424;transform:scaleX(0.9414);">Ansys Response Surface</span>
<span style="left:1251.70px;top:72px;font-size:17px;color:#242424;transform:scaleX(1.0172);">Acrobat</span>
<span style="left:84.60px;top:72px;font-size:17px;color:#1a1a1a;-webkit-text-stroke:0.55px #1a1a1a;transform:scaleX(1.0141);">Home</span>
<span style="left:1336.00px;top:72px;font-size:17px;color:#1a7342;transform:scaleX(0.9737);">Table Design</span>
<div style="left:84px;top:92px;width:49px;height:3px;background:#1c7043;border-radius:1.5px;"></div>
<div style="left:1687.5px;top:64px;width:117px;height:30px;background:#ffffff;border:1px solid #9a9a9a;border-radius:5px;box-sizing:border-box;"></div>
<svg style="left:1693.8px;top:72.3px;" width="13" height="12.4" viewBox="0 0 13 12.4"><path d="M1.4 0.7 H11.4 Q12.3 0.7 12.3 1.6 V7.6 Q12.3 8.5 11.4 8.5 H5.4 L2.4 11.4 V8.5 H1.4 Q0.6 8.5 0.6 7.6 V1.6 Q0.6 0.7 1.4 0.7 Z" fill="none" stroke="#2a2a2a" stroke-width="1.2" stroke-linejoin="round"/></svg>
<span style="left:1713.50px;top:71px;font-size:15.8px;color:#242424;transform:scaleX(1.0828);">Comments</span>
<div style="left:1815px;top:64px;width:90.5px;height:30px;background:#1a7a43;border-radius:5px;"></div>
<svg style="left:1820.6px;top:71.4px;" width="15" height="14.4" viewBox="0 0 15 14.4"><path d="M0.7 6.4 V13.6 H13 V10.6" fill="none" stroke="#fff" stroke-width="1.3" stroke-linecap="round" stroke-linejoin="round"/><path d="M3.6 10.4 C4 6.6 6.2 4.6 9.6 4.5 V1.2 L14.4 5.7 L9.6 10 V7 C6.8 6.9 5.2 8 3.6 10.4 Z" fill="none" stroke="#fff" stroke-width="1.2" stroke-linejoin="round"/></svg>
<span style="left:1841.80px;top:71px;font-size:15.8px;color:#fff;-webkit-text-stroke:0.5px #fff;transform:scaleX(0.9868);">Share</span>
<svg style="left:1892.9px;top:77.5px;" width="7.5" height="4" viewBox="0 0 7.5 4"><path d="M0.7 0.5 L3.75 3.6 L6.8 0.5" fill="none" stroke="#fff" stroke-width="1.5" stroke-linecap="round" stroke-linejoin="round"/></svg>
<div style="left:10.5px;top:232px;width:126px;height:29.5px;background:#ffffff;border:1px solid #e0e0e0;border-top-color:#c9c9c9;border-radius:5px;box-sizing:border-box;"></div>
<span style="left:17.00px;top:239px;font-size:17px;color:#242424;transform:scaleX(0.8799);">A8</span>
<svg style="left:117.5px;top:246px;" width="12" height="6.5" viewBox="0 0 12 6.5"><path d="M0.7 0.5 L6.0 6.1 L11.3 0.5" fill="none" stroke="#2a2a2a" stroke-width="1.4" stroke-linecap="round" stroke-linejoin="round"/></svg>
<div style="left:148px;top:241.1px;width:2.8px;height:2.7px;background:#3a3a3a;"></div>
<div style="left:148px;top:246.2px;width:2.8px;height:2.7px;background:#3a3a3a;"></div>
<div style="left:148px;top:251.3px;width:2.8px;height:2.7px;background:#3a3a3a;"></div>
<div style="left:162px;top:232px;width:107px;height:29.5px;background:#ffffff;border:1px solid #e0e0e0;border-top-color:#c9c9c9;border-radius:5px;box-sizing:border-box;"></div>
<svg style="left:171px;top:240px;" width="14" height="14" viewBox="0 0 14 14"><path d="M0.7 0.7 L13.3 13.3 M13.3 0.7 L0.7 13.3" stroke="#b9b9b9" stroke-width="1.3"/></svg>
<svg style="left:197.5px;top:240px;" width="20" height="14" viewBox="0 0 20 14"><path d="M0.7 7.6 L6.2 13 L19.3 0.8" fill="none" stroke="#b9b9b9" stroke-width="1.3"/></svg>
<span style="left:230.60px;top:235px;font-size:22px;color:#2e2e2e;font-style:italic;font-family:'Liberation Serif';-webkit-text-stroke:0.35px #2e2e2e;">f</span>
<span style="left:238.20px;top:237px;font-size:20px;color:#2e2e2e;font-style:italic;font-family:'Liberation Serif';-webkit-text-stroke:0.35px #2e2e2e;">x</span>
<svg style="left:254px;top:244.5px;" width="11.5" height="6" viewBox="0 0 11.5 6"><path d="M0.7 0.5 L5.75 5.6 L10.8 0.5" fill="none" stroke="#777" stroke-width="1.2" stroke-linecap="round" stroke-linejoin="round"/></svg>
<div style="left:274.5px;top:232px;width:1635.5px;height:77.5px;background:#ffffff;border:1px solid #e2e2e2;border-top-color:#c9c9c9;border-radius:5px;box-sizing:border-box;box-shadow:0 1px 1px rgba(0,0,0,.06);"></div>
<span style="left:287.20px;top:239px;font-size:17px;color:#242424;transform:scaleX(0.9373);">Team Members</span>
<svg style="left:1893.5px;top:241.5px;" width="12.5" height="7" viewBox="0 0 12.5 7"><path d="M0.5 6.5 L6.25 0.7 L12 6.5" fill="none" stroke="#444" stroke-width="1.4" stroke-linecap="round" stroke-linejoin="round"/></svg>
<div style="left:10px;top:97.7px;width:1899px;height:124px;background:#ffffff;border-radius:9px;box-shadow:0 1px 3px rgba(0,0,0,.16),0 0 1px rgba(0,0,0,.10);"></div>
<div style="left:148px;top:105px;width:1px;height:110px;background:#d4d4d4;"></div>
<div style="left:440px;top:105px;width:1px;height:110px;background:#d4d4d4;"></div>
<div style="left:814px;top:105px;width:1px;height:110px;background:#d4d4d4;"></div>
<div style="left:1014px;top:105px;width:1px;height:110px;background:#d4d4d4;"></div>
<div style="left:1260px;top:105px;width:1px;height:110px;background:#d4d4d4;"></div>
<div style="left:1396px;top:105px;width:1px;height:110px;background:#d4d4d4;"></div>
<div style="left:1593px;top:105px;width:1px;height:110px;background:#d4d4d4;"></div>
<div style="left:1685px;top:105px;width:1px;height:110px;background:#d4d4d4;"></div>
<div style="left:1763px;top:105px;width:1px;height:110px;background:#d4d4d4;"></div>
<div style="left:1861px;top:105px;width:1px;height:110px;background:#d4d4d4;"></div>
<svg style="left:36px;top:107px;" width="36" height="40" viewBox="0 0 36 40">
<rect x="2.2" y="7.4" width="24" height="28" fill="#f6f6f6" stroke="#eaa43f" stroke-width="2"/>
<rect x="4" y="9" width="20.4" height="24.8" fill="none" stroke="#f6d9a8" stroke-width="0.9"/>
<path d="M6.6 10.6 V7.6 H10.2 C10.6 3.6 11.9 1.4 14.2 1.4 C16.5 1.4 17.8 3.6 18.2 7.6 H21.8 V10.6 Z" fill="#f3f3f3" stroke="#868686" stroke-width="1.3" stroke-linejoin="round"/>
<rect x="18.2" y="17.2" width="16.2" height="21" fill="#f9f9f9" stroke="#555" stroke-width="1.4"/></svg>
<span style="left:34.00px;top:153px;font-size:15px;color:#242424;transform:scaleX(0.8733);">Paste</span>
<svg style="left:47px;top:177.5px;" width="7" height="3.8000000000000114" viewBox="0 0 7 3.8000000000000114"><path d="M0.7 0.5 L3.5 3.4000000000000115 L6.3 0.5" fill="none" stroke="#333" stroke-width="1.4" stroke-linecap="round" stroke-linejoin="round"/></svg>
<svg style="left:87px;top:106px;" width="14" height="22" viewBox="0 0 14 22"><path d="M3.6 1.4 L10.3 16 M10.4 1.4 L3.7 16" stroke="#444" stroke-width="1.3" stroke-linecap="round"/>
<circle cx="3.2" cy="18.3" r="2.2" fill="#e8f4fc" stroke="#2f93d6" stroke-width="1.3"/><circle cx="10.8" cy="18.3" r="2.2" fill="#e8f4fc" stroke="#2f93d6" stroke-width="1.3"/></svg>
<svg style="left:84px;top:139px;" width="21" height="20" viewBox="0 0 21 20"><path d="M7.4 16.6 H1.8 Q0.8 16.6 0.8 15.6 V1.6 Q0.8 0.7 1.8 0.7 H7.4 Q8.6 0.7 9.2 2.6" fill="none" stroke="#444" stroke-width="1.3"/>
<path d="M8.4 3.8 H15 L19.6 8.6 V19.2 H8.4 Z" fill="#fafafa" stroke="#444" stroke-width="1.3" stroke-linejoin="round"/>
<path d="M14.8 4 V8.8 H19.4" fill="none" stroke="#444" stroke-width="1.1"/>
<path d="M11.2 12.3 H16.8 M11.2 15 H16.8" stroke="#444" stroke-width="1.1"/></svg>
<svg style="left:120px;top:147px;" width="7" height="4" viewBox="0 0 7 4"><path d="M0.7 0.5 L3.5 3.6 L6.3 0.5" fill="none" stroke="#333" stroke-width="1.4" stroke-linecap="round" stroke-linejoin="round"/></svg>
<svg style="left:84px;top:170px;" width="21" height="20" viewBox="0 0 21 20"><path d="M12.2 6.6 L17 2.2 Q18.2 1.2 19.2 2.3 Q20 3.4 19 4.4 L14.6 9" fill="#fff" stroke="#444" stroke-width="1.2"/>
<path d="M9.6 6.6 L11.6 4.8 L17 10.4 L15 12.4 Z" fill="#fff" stroke="#444" stroke-width="1.2" stroke-linejoin="round"/>
<path d="M1 9.6 L9.4 7.2 L14.6 12.6 L8.6 18.8 Z" fill="#fbe3c0" stroke="#e8943a" stroke-width="1.4" stroke-linejoin="round"/>
<path d="M5.2 14.2 L12 10 M7 16.8 L13.4 11.6" stroke="#e8943a" stroke-width="0.9"/></svg>
<span style="left:42.50px;top:203px;font-size:13px;color:#242424;transform:scaleX(1.0241);">Clipboard</span>
<svg style="left:134px;top:205px;" width="10" height="10" viewBox="0 0 10 10"><path d="M0.6 8.8 V0.6 H8.8" fill="none" stroke="#2a2a2a" stroke-width="1.2" stroke-linecap="round" stroke-linejoin="round"/><path d="M3.9 4.1 L9.3 9.2 M9.4 4.4 V9.4 H4" fill="none" stroke="#2a2a2a" stroke-width="1.2" stroke-linecap="round" stroke-linejoin="round"/></svg>
<div style="left:159px;top:112px;width:143px;height:30px;background:#fff;border:1px solid #8e8e8e;border-radius:5px;box-sizing:border-box;"></div>
<div style="left:304px;top:112px;width:63px;height:30px;background:#fff;border:1px solid #8e8e8e;border-radius:5px;box-sizing:border-box;"></div>
<span style="left:162.50px;top:120px;font-size:15px;color:#242424;transform:scaleX(0.9785);">Calibri</span>
<svg style="left:290.5px;top:125.5px;" width="7.0" height="4.0" viewBox="0 0 7.0 4.0"><path d="M0.7 0.5 L3.5 3.6 L6.3 0.5" fill="none" stroke="#333" stroke-width="1.4" stroke-linecap="round" stroke-linejoin="round"/></svg>
<span style="left:306.60px;top:120px;font-size:15px;color:#242424;">11</span>
<svg style="left:355.5px;top:125.5px;" width="7.0" height="4.0" viewBox="0 0 7.0 4.0"><path d="M0.7 0.5 L3.5 3.6 L6.3 0.5" fill="none" stroke="#333" stroke-width="1.4" stroke-linecap="round" stroke-linejoin="round"/></svg>
<span style="left:374.60px;top:115px;font-size:21px;color:#444;transform:scaleX(1.0702);">A</span>
<svg style="left:388.6px;top:118px;" width="5.4" height="4.6" viewBox="0 0 5.4 4.6"><path d="M0.5 4 L2.7 0.8 L4.9 4" fill="none" stroke="#2f93d6" stroke-width="1.4" stroke-linecap="round" stroke-linejoin="round"/></svg>
<span style="left:408.80px;top:119px;font-size:16.2px;color:#444;transform:scaleX(1.1098);">A</span>
<svg style="left:420.4px;top:118px;" width="5.4" height="4.6" viewBox="0 0 5.4 4.6"><path d="M0.5 0.8 L2.7 4 L4.9 0.8" fill="none" stroke="#2f93d6" stroke-width="1.4" stroke-linecap="round" stroke-linejoin="round"/></svg>
<span style="left:169.60px;top:157px;font-size:16.3px;color:#3b3b3b;font-weight:700;transform:scaleX(0.7989);">B</span>
<span style="left:202.50px;top:157px;font-size:17px;color:#3b3b3b;font-style:italic;font-family:'Liberation Serif';transform:scaleX(1.3223);">I</span>
<span style="left:232.20px;top:158px;font-size:15.4px;color:#3b3b3b;transform:scaleX(0.9169);">U</span>
<div style="left:231.6px;top:173.3px;width:11.400000000000006px;height:1.3px;background:#3b3b3b;"></div>
<svg style="left:257.8px;top:165.3px;" width="7.099999999999966" height="3.8999999999999773" viewBox="0 0 7.099999999999966 3.8999999999999773"><path d="M0.7 0.5 L3.549999999999983 3.4999999999999774 L6.399999999999966 0.5" fill="none" stroke="#333" stroke-width="1.4" stroke-linecap="round" stroke-linejoin="round"/></svg>
<div style="left:274px;top:152px;width:1px;height:30px;background:#d4d4d4;"></div>
<svg style="left:282px;top:157px;" width="19" height="19" viewBox="0 0 19 19"><path d="M0.6 0.6 H18.4 M0.6 0.6 V17 M18.4 0.6 V17 M9.5 0.6 V17 M0.6 9 H18.4" fill="none" stroke="#555" stroke-width="1.2" stroke-dasharray="1.4 1.6"/>
<path d="M0 18 H19" stroke="#444" stroke-width="1.7"/></svg>
<svg style="left:311.8px;top:165.3px;" width="7.099999999999966" height="3.8999999999999773" viewBox="0 0 7.099999999999966 3.8999999999999773"><path d="M0.7 0.5 L3.549999999999983 3.4999999999999774 L6.399999999999966 0.5" fill="none" stroke="#333" stroke-width="1.4" stroke-linecap="round" stroke-linejoin="round"/></svg>
<div style="left:328px;top:152px;width:1px;height:30px;background:#d4d4d4;"></div>
<svg style="left:336px;top:156px;" width="21" height="21" viewBox="0 0 21 21"><path d="M9.7 2 L3.3 9.4 L8.9 14.7 L14.9 9.1 L12.2 6.2" fill="none" stroke="#3b3b3b" stroke-width="1.3" stroke-linejoin="miter"/>
<path d="M9.4 2.4 Q10 0.9 11 1.1 Q11.9 1.3 11.9 2.6 V7.6" fill="none" stroke="#3b3b3b" stroke-width="1.3" stroke-linecap="round"/>
<path d="M14.2 5.2 Q17.6 5.4 17.8 9 Q17.9 11.2 17.1 12.4 Q16.8 9.4 14.2 7.8 Z" fill="#2a73c0"/>
<rect x="0" y="16.2" width="19.9" height="4.7" fill="#000"/></svg>
<svg style="left:365.8px;top:165.3px;" width="6.899999999999977" height="3.8999999999999773" viewBox="0 0 6.899999999999977 3.8999999999999773"><path d="M0.7 0.5 L3.4499999999999886 3.4999999999999774 L6.199999999999977 0.5" fill="none" stroke="#333" stroke-width="1.4" stroke-linecap="round" stroke-linejoin="round"/></svg>
<span style="left:390.60px;top:156px;font-size:17.6px;color:#444;transform:scaleX(1.1064);">A</span>
<div style="left:387px;top:172.2px;width:19.9px;height:4.7px;background:#f20d0d;"></div>
<svg style="left:416.9px;top:165.3px;" width="7.100000000000023" height="3.8999999999999773" viewBox="0 0 7.100000000000023 3.8999999999999773"><path d="M0.7 0.5 L3.5500000000000114 3.4999999999999774 L6.400000000000023 0.5" fill="none" stroke="#333" stroke-width="1.4" stroke-linecap="round" stroke-linejoin="round"/></svg>
<span style="left:271.00px;top:203px;font-size:13px;color:#242424;transform:scaleX(0.9417);">Font</span>
<svg style="left:425.3px;top:205px;" width="10" height="10" viewBox="0 0 10 10"><path d="M0.6 8.8 V0.6 H8.8" fill="none" stroke="#2a2a2a" stroke-width="1.2" stroke-linecap="round" stroke-linejoin="round"/><path d="M3.9 4.1 L9.3 9.2 M9.4 4.4 V9.4 H4" fill="none" stroke="#2a2a2a" stroke-width="1.2" stroke-linecap="round" stroke-linejoin="round"/></svg>
<svg style="left:0px;top:0px;" width="1" height="1" viewBox="0 0 1 1"><path d="M457.2 117.8 H475" stroke="#4a4a4a" stroke-width="1.35"/><path d="M459.5 122.9 H472.6" stroke="#4a4a4a" stroke-width="1.35"/><path d="M457.2 128.1 H475" stroke="#4a4a4a" stroke-width="1.35"/></svg>
<svg style="left:0px;top:0px;" width="1" height="1" viewBox="0 0 1 1"><path d="M489 120.8 H507" stroke="#4a4a4a" stroke-width="1.35"/><path d="M491.3 126.1 H504.7" stroke="#4a4a4a" stroke-width="1.35"/><path d="M489 131.3 H507" stroke="#4a4a4a" stroke-width="1.35"/></svg>
<div style="left:515px;top:112px;width:30px;height:30px;background:#e9e9e9;border:1px solid #7e7e7e;border-radius:5px;box-sizing:border-box;"></div>
<svg style="left:0px;top:0px;" width="1" height="1" viewBox="0 0 1 1"><path d="M523 126.2 H536.5" stroke="#4a4a4a" stroke-width="1.35"/><path d="M520.8 131.3 H538.7" stroke="#4a4a4a" stroke-width="1.35"/><path d="M520.8 136.4 H538.7" stroke="#4a4a4a" stroke-width="1.35"/></svg>
<div style="left:547px;top:112px;width:1px;height:30px;background:#d4d4d4;"></div>
<svg style="left:554px;top:116px;" width="23" height="21" viewBox="0 0 23 21"><g transform="translate(4.6 14.6) rotate(-45)"><text x="0" y="0" font-family="Liberation Sans" font-size="12.4" fill="#444">ab</text></g>
<path d="M7.6 19.2 L20.8 6 M15.4 5.6 H21.2 V11.4" fill="none" stroke="#2f93d6" stroke-width="1.4" stroke-linecap="round" stroke-linejoin="round"/></svg>
<svg style="left:583px;top:125.8px;" width="7" height="3.8999999999999915" viewBox="0 0 7 3.8999999999999915"><path d="M0.7 0.5 L3.5 3.4999999999999916 L6.3 0.5" fill="none" stroke="#333" stroke-width="1.4" stroke-linecap="round" stroke-linejoin="round"/></svg>
<div style="left:619px;top:111px;width:1px;height:78px;background:#d4d4d4;"></div>
<svg style="left:634px;top:117px;" width="20" height="21" viewBox="0 0 20 21"><text x="1" y="9" font-family="Liberation Sans" font-size="10.6" fill="#444">ab</text><text x="1" y="19.4" font-family="Liberation Sans" font-size="10.6" fill="#444">c</text>
<path d="M14.6 9.6 Q18.6 11 17.6 14 Q16.6 16.4 13 16.2 H8.4 M11.6 12.8 L8.2 16.2 L11.6 19.6" fill="none" stroke="#2f93d6" stroke-width="1.4" stroke-linecap="round" stroke-linejoin="round"/></svg>
<span style="left:657.60px;top:120px;font-size:15px;color:#242424;transform:scaleX(0.9913);">Wrap Text</span>
<svg style="left:0px;top:0px;" width="1" height="1" viewBox="0 0 1 1"><path d="M457.2 158.8 H475" stroke="#4a4a4a" stroke-width="1.35"/><path d="M457.2 163.9 H469.8" stroke="#4a4a4a" stroke-width="1.35"/><path d="M457.2 169 H475" stroke="#4a4a4a" stroke-width="1.35"/><path d="M457.2 174.1 H469.8" stroke="#4a4a4a" stroke-width="1.35"/></svg>
<svg style="left:0px;top:0px;" width="1" height="1" viewBox="0 0 1 1"><path d="M489 158.8 H507" stroke="#4a4a4a" stroke-width="1.35"/><path d="M491.8 163.9 H504.2" stroke="#4a4a4a" stroke-width="1.35"/><path d="M489 169 H507" stroke="#4a4a4a" stroke-width="1.35"/><path d="M491.8 174.1 H504.2" stroke="#4a4a4a" stroke-width="1.35"/></svg>
<svg style="left:0px;top:0px;" width="1" height="1" viewBox="0 0 1 1"><path d="M520.8 158.8 H538.7" stroke="#4a4a4a" stroke-width="1.35"/><path d="M526 163.9 H538.7" stroke="#4a4a4a" stroke-width="1.35"/><path d="M520.8 169 H538.7" stroke="#4a4a4a" stroke-width="1.35"/><path d="M526 174.1 H538.7" stroke="#4a4a4a" stroke-width="1.35"/></svg>
<div style="left:547px;top:152px;width:1px;height:30px;background:#d4d4d4;"></div>
<svg style="left:0px;top:0px;" width="1" height="1" viewBox="0 0 1 1"><path d="M555.9 158.8 H573.7" stroke="#4a4a4a" stroke-width="1.35"/><path d="M566.6 163.9 H573.7" stroke="#4a4a4a" stroke-width="1.35"/><path d="M566.6 169 H573.7" stroke="#4a4a4a" stroke-width="1.35"/><path d="M555.9 174.1 H573.7" stroke="#4a4a4a" stroke-width="1.35"/></svg>
<svg style="left:556px;top:163px;" width="9" height="7" viewBox="0 0 9 7"><path d="M8.4 3.5 H0.8 M3.6 0.6 L0.7 3.5 L3.6 6.4" fill="none" stroke="#2f93d6" stroke-width="1.3" stroke-linecap="round" stroke-linejoin="round"/></svg>
<svg style="left:0px;top:0px;" width="1" height="1" viewBox="0 0 1 1"><path d="M588.2 158.8 H606" stroke="#4a4a4a" stroke-width="1.35"/><path d="M599 163.9 H606" stroke="#4a4a4a" stroke-width="1.35"/><path d="M599 169 H606" stroke="#4a4a4a" stroke-width="1.35"/><path d="M588.2 174.1 H606" stroke="#4a4a4a" stroke-width="1.35"/></svg>
<svg style="left:588.3px;top:163px;" width="9" height="7" viewBox="0 0 9 7"><path d="M0.6 3.5 H8.2 M5.4 0.6 L8.3 3.5 L5.4 6.4" fill="none" stroke="#2f93d6" stroke-width="1.3" stroke-linecap="round" stroke-linejoin="round"/></svg>
<svg style="left:631.5px;top:157px;" width="20" height="19" viewBox="0 0 20 19"><rect x="0.8" y="0.8" width="18" height="17.4" fill="#ececec" stroke="#b5b5b5" stroke-width="1.5"/>
<path d="M0.8 4.4 H18.8 M0.8 14.6 H18.8 M6.6 0.8 V4.4 M13 0.8 V4.4 M6.6 14.6 V18.2 M13 14.6 V18.2" stroke="#b5b5b5" stroke-width="1.2"/>
<path d="M3.6 9.5 H16 M5.8 7.2 L3.4 9.5 L5.8 11.8 M13.8 7.2 L16.2 9.5 L13.8 11.8" fill="none" stroke="#b5b5b5" stroke-width="1.2"/></svg>
<span style="left:657.60px;top:160px;font-size:15px;color:#b3b3b3;transform:scaleX(0.9954);">Merge &amp; Center</span>
<svg style="left:785.7px;top:165.8px;" width="7.2999999999999545" height="3.6999999999999886" viewBox="0 0 7.2999999999999545 3.6999999999999886"><path d="M0.7 0.5 L3.6499999999999773 3.2999999999999887 L6.599999999999954 0.5" fill="none" stroke="#c0c0c0" stroke-width="1.4" stroke-linecap="round" stroke-linejoin="round"/></svg>
<span style="left:588.00px;top:203px;font-size:13px;color:#242424;">Alignment</span>
<svg style="left:799.3px;top:205px;" width="10" height="10" viewBox="0 0 10 10"><path d="M0.6 8.8 V0.6 H8.8" fill="none" stroke="#2a2a2a" stroke-width="1.2" stroke-linecap="round" stroke-linejoin="round"/><path d="M3.9 4.1 L9.3 9.2 M9.4 4.4 V9.4 H4" fill="none" stroke="#2a2a2a" stroke-width="1.2" stroke-linecap="round" stroke-linejoin="round"/></svg>
<div style="left:825px;top:112px;width:180px;height:30px;background:#fff;border:1px solid #8e8e8e;border-radius:5px;box-sizing:border-box;"></div>
<span style="left:828.30px;top:120px;font-size:15px;color:#242424;transform:scaleX(0.9386);">General</span>
<svg style="left:993.8px;top:125.5px;" width="7.0" height="4.0" viewBox="0 0 7.0 4.0"><path d="M0.7 0.5 L3.5 3.6 L6.3 0.5" fill="none" stroke="#333" stroke-width="1.4" stroke-linecap="round" stroke-linejoin="round"/></svg>
<span style="left:834.60px;top:155px;font-size:23px;color:#444;transform:scaleX(0.7346);">$</span>
<svg style="left:859.8px;top:165.5px;" width="7.0" height="3.8000000000000114" viewBox="0 0 7.0 3.8000000000000114"><path d="M0.7 0.5 L3.5 3.4000000000000115 L6.3 0.5" fill="none" stroke="#333" stroke-width="1.4" stroke-linecap="round" stroke-linejoin="round"/></svg>
<span style="left:881.50px;top:158px;font-size:22px;color:#444;transform:scaleX(0.9712);">%</span>
<svg style="left:918px;top:158px;" width="11" height="18" viewBox="0 0 11 18"><path d="M5.8 1 C8.6 1 10.2 3 10.2 6 C10.2 11 6.6 15 1.2 16.8 L0.8 15.8 C4.2 14.2 6 12.2 6.2 9.6 C3.6 10 1.4 8.4 1.4 5.6 C1.4 3 3.2 1 5.8 1 Z" fill="#3b3b3b"/></svg>
<div style="left:940px;top:152px;width:1px;height:30px;background:#d4d4d4;"></div>
<svg style="left:947px;top:156px;" width="21" height="21" viewBox="0 0 21 21"><path d="M12 6.6 H1.8 M5.2 3 L1.6 6.6 L5.2 10.2" fill="none" stroke="#2f93d6" stroke-width="1.4" stroke-linecap="round" stroke-linejoin="round"/>
<text x="14" y="9.2" font-family="Liberation Sans" font-size="10.6" fill="#444">0</text><text x="3.4" y="19.6" font-family="Liberation Sans" font-size="10.6" fill="#444" textLength="16.6" lengthAdjust="spacingAndGlyphs">.00</text></svg>
<svg style="left:979px;top:156px;" width="21" height="21" viewBox="0 0 21 21"><path d="M1.6 15.8 H11.8 M8.4 12.2 L12 15.8 L8.4 19.4" fill="none" stroke="#2f93d6" stroke-width="1.4" stroke-linecap="round" stroke-linejoin="round"/>
<text x="3" y="9.2" font-family="Liberation Sans" font-size="10.6" fill="#444" textLength="16.6" lengthAdjust="spacingAndGlyphs">.00</text><text x="10.4" y="19.6" font-family="Liberation Sans" font-size="10.6" fill="#444">.0</text></svg>
<span style="left:880.00px;top:203px;font-size:13px;color:#242424;transform:scaleX(1.0270);">Number</span>
<svg style="left:999.8px;top:205px;" width="10" height="10" viewBox="0 0 10 10"><path d="M0.6 8.8 V0.6 H8.8" fill="none" stroke="#2a2a2a" stroke-width="1.2" stroke-linecap="round" stroke-linejoin="round"/><path d="M3.9 4.1 L9.3 9.2 M9.4 4.4 V9.4 H4" fill="none" stroke="#2a2a2a" stroke-width="1.2" stroke-linecap="round" stroke-linejoin="round"/></svg>
<svg style="left:1053px;top:112px;" width="37" height="29" viewBox="0 0 37 29"><rect x="0.7" y="0.7" width="35" height="27.4" fill="#fff" stroke="#6e6e6e" stroke-width="1.4"/>
<path d="M7 0.7 V28 M28.4 0.7 V28 M0.7 9.8 H35.7 M0.7 18.6 H35.7 M22 0.7 V28" stroke="#6e6e6e" stroke-width="1.2"/>
<rect x="7" y="0.7" width="15.4" height="9" fill="#f7828a" stroke="#d4373f" stroke-width="1.2"/>
<rect x="7" y="18.8" width="18.4" height="9.2" fill="#f7828a" stroke="#d4373f" stroke-width="1.2"/>
<rect x="7" y="10.4" width="10.4" height="7.6" fill="#5b9bd5" stroke="#d4373f" stroke-width="1"/></svg>
<span style="left:1033.10px;top:150px;font-size:15px;color:#242424;transform:scaleX(1.0178);">Conditional</span>
<span style="left:1028.50px;top:170px;font-size:15px;color:#242424;">Formatting</span>
<svg style="left:1106.5px;top:175.8px;" width="6.5" height="3.6999999999999886" viewBox="0 0 6.5 3.6999999999999886"><path d="M0.7 0.5 L3.25 3.2999999999999887 L5.8 0.5" fill="none" stroke="#333" stroke-width="1.4" stroke-linecap="round" stroke-linejoin="round"/></svg>
<svg style="left:1137px;top:112px;" width="40" height="35" viewBox="0 0 40 35"><rect x="0.7" y="0.7" width="35" height="27.4" fill="#fff" stroke="#6e6e6e" stroke-width="1.4"/>
<rect x="12.6" y="9.4" width="23" height="18.6" fill="#6db1ee"/>
<path d="M12.4 0.7 V28 M23.8 0.7 V28 M0.7 9.4 H35.7 M0.7 18.8 H35.7" stroke="#6e6e6e" stroke-width="1.2"/>
<path d="M12.6 9.4 V28 H35.6" fill="none" stroke="#2f86d0" stroke-width="1.2"/><path d="M23.8 9.6 V28 M12.6 18.8 H35.6" stroke="#3a8fd8" stroke-width="1.2"/>
<path d="M36.6 9.6 Q38.6 10.4 37.4 12.6 L26.6 26.4 L23 24 L34.2 10.4 Q35.4 9 36.6 9.6 Z" fill="#fff" stroke="#555" stroke-width="1.3" stroke-linejoin="round"/>
<path d="M22.6 24 L26.8 26.8 Q26.4 33.6 17.6 34 Q12.6 34 10.6 31.6 Q15 31.4 16.4 27.8 Q18 23.6 22.6 24 Z" fill="#5ea6e6" stroke="#2f86d0" stroke-width="1.1" stroke-linejoin="round"/></svg>
<span style="left:1123.60px;top:150px;font-size:15px;color:#242424;transform:scaleX(0.9494);">Format as</span>
<span style="left:1132.40px;top:170px;font-size:15px;color:#242424;transform:scaleX(0.9314);">Table</span>
<svg style="left:1171.2px;top:175.8px;" width="6.599999999999909" height="3.6999999999999886" viewBox="0 0 6.599999999999909 3.6999999999999886"><path d="M0.7 0.5 L3.2999999999999545 3.2999999999999887 L5.899999999999909 0.5" fill="none" stroke="#333" stroke-width="1.4" stroke-linecap="round" stroke-linejoin="round"/></svg>
<svg style="left:1204.5px;top:112px;" width="40" height="35" viewBox="0 0 40 35"><rect x="0.7" y="0.7" width="35" height="27.4" fill="#fff" stroke="#6e6e6e" stroke-width="1.4"/>
<path d="M6.4 0.7 V28 M29 0.7 V28 M0.7 6.4 H35.7 M0.7 21.2 H35.7" stroke="#6e6e6e" stroke-width="1.2"/>
<rect x="6.4" y="6.4" width="22.6" height="14.8" fill="#6db1ee" stroke="#2f86d0" stroke-width="1.3"/>
<path d="M36.6 9.6 Q38.6 10.4 37.4 12.6 L26.6 26.4 L23 24 L34.2 10.4 Q35.4 9 36.6 9.6 Z" fill="#fff" stroke="#555" stroke-width="1.3" stroke-linejoin="round"/>
<path d="M22.6 24 L26.8 26.8 Q26.4 33.6 17.6 34 Q12.6 34 10.6 31.6 Q15 31.4 16.4 27.8 Q18 23.6 22.6 24 Z" fill="#5ea6e6" stroke="#2f86d0" stroke-width="1.1" stroke-linejoin="round"/></svg>
<span style="left:1209.00px;top:150px;font-size:15px;color:#242424;transform:scaleX(0.9441);">Cell</span>
<span style="left:1196.50px;top:170px;font-size:15px;color:#242424;transform:scaleX(0.9129);">Styles</span>
<svg style="left:1239.3px;top:175.8px;" width="6.7000000000000455" height="3.6999999999999886" viewBox="0 0 6.7000000000000455 3.6999999999999886"><path d="M0.7 0.5 L3.3500000000000227 3.2999999999999887 L6.000000000000045 0.5" fill="none" stroke="#333" stroke-width="1.4" stroke-linecap="round" stroke-linejoin="round"/></svg>
<span style="left:1120.00px;top:204px;font-size:13px;color:#242424;transform:scaleX(0.9179);">Styles</span>
<svg style="left:1276px;top:108px;" width="21" height="18" viewBox="0 0 21 18"><rect x="0.7" y="0.8" width="18.8" height="16" fill="#fff" stroke="#444" stroke-width="1.4"/>
<path d="M7 0.8 V16.8 M13.2 0.8 V16.8 M0.7 4.6 H19.5 M0.7 12.6 H19.5" stroke="#444" stroke-width="1.2"/>
<rect x="7" y="5.2" width="12.4" height="6.8" fill="#5b9fe0"/><path d="M13.2 5.2 V12" stroke="#2f7fc8" stroke-width="1"/>
<rect x="-0.4" y="5.4" width="7" height="6.6" fill="#fff"/>
<path d="M9 8.6 H1.2 M4.4 5.4 L1 8.6 L4.4 11.8" fill="none" stroke="#2f93d6" stroke-width="1.4" stroke-linecap="round" stroke-linejoin="round"/></svg>
<span style="left:1301.60px;top:110px;font-size:15px;color:#242424;transform:scaleX(0.9409);">Insert</span>
<svg style="left:1359.8px;top:115.6px;" width="7.0" height="3.9000000000000057" viewBox="0 0 7.0 3.9000000000000057"><path d="M0.7 0.5 L3.5 3.5000000000000058 L6.3 0.5" fill="none" stroke="#333" stroke-width="1.4" stroke-linecap="round" stroke-linejoin="round"/></svg>
<svg style="left:1276px;top:140px;" width="21" height="18" viewBox="0 0 21 18"><rect x="0.7" y="0.8" width="18.8" height="16" fill="#fff" stroke="#444" stroke-width="1.4"/>
<path d="M7 0.8 V16.8 M13.2 0.8 V16.8 M0.7 4.6 H19.5 M0.7 12.6 H19.5" stroke="#444" stroke-width="1.2"/>
<rect x="11.4" y="3.6" width="9" height="10" fill="#fff"/>
<rect x="4.6" y="5.2" width="6.6" height="6.8" fill="#5b9fe0" stroke="#2a6fb5" stroke-width="1.2"/>
<path d="M13.6 5.6 L19 11.6 M19 5.6 L13.6 11.6" stroke="#e0393e" stroke-width="1.3" stroke-linecap="round"/></svg>
<span style="left:1301.60px;top:142px;font-size:15px;color:#242424;transform:scaleX(0.9940);">Delete</span>
<svg style="left:1367.8px;top:147.7px;" width="7.100000000000136" height="3.9000000000000057" viewBox="0 0 7.100000000000136 3.9000000000000057"><path d="M0.7 0.5 L3.550000000000068 3.5000000000000058 L6.400000000000136 0.5" fill="none" stroke="#333" stroke-width="1.4" stroke-linecap="round" stroke-linejoin="round"/></svg>
<svg style="left:1276px;top:171px;" width="21" height="20" viewBox="0 0 21 20"><rect x="0.7" y="3.4" width="18.8" height="16" fill="#fff" stroke="#444" stroke-width="1.4"/>
<path d="M5.4 3.4 V19.4 M14.8 3.4 V19.4 M0.7 7.4 H19.5 M0.7 15.4 H19.5" stroke="#444" stroke-width="1.2"/>
<rect x="5.4" y="7.4" width="9.4" height="8" fill="#5b9fe0" stroke="#2a6fb5" stroke-width="1.2"/>
<rect x="3.2" y="-0.6" width="14" height="3.6" fill="#fff"/>
<path d="M4.4 1.4 H15.8 M4.4 -0.2 V3 M15.8 -0.2 V3" stroke="#2f93d6" stroke-width="1.2" fill="none"/></svg>
<span style="left:1301.60px;top:174px;font-size:15px;color:#242424;transform:scaleX(0.9765);">Format</span>
<svg style="left:1353.2px;top:178.9px;" width="6.7999999999999545" height="3.799999999999983" viewBox="0 0 6.7999999999999545 3.799999999999983"><path d="M0.7 0.5 L3.3999999999999773 3.399999999999983 L6.099999999999954 0.5" fill="none" stroke="#333" stroke-width="1.4" stroke-linecap="round" stroke-linejoin="round"/></svg>
<span style="left:1314.70px;top:204px;font-size:13px;color:#242424;transform:scaleX(0.8891);">Cells</span>
<svg style="left:1414px;top:108px;" width="17" height="18" viewBox="0 0 17 18"><path d="M15.2 3.4 V1 H1.4 L8.6 8.8 L1.4 16.8 H15.6 V14.2" fill="none" stroke="#444" stroke-width="1.4" stroke-linejoin="miter"/></svg>
<svg style="left:1448.1px;top:115.6px;" width="7.0" height="3.9000000000000057" viewBox="0 0 7.0 3.9000000000000057"><path d="M0.7 0.5 L3.5 3.5000000000000058 L6.3 0.5" fill="none" stroke="#333" stroke-width="1.4" stroke-linecap="round" stroke-linejoin="round"/></svg>
<svg style="left:1412px;top:140px;" width="20" height="18" viewBox="0 0 20 18"><rect x="0.7" y="0.8" width="18.6" height="16.2" fill="#fff" stroke="#444" stroke-width="1.4"/><rect x="1.2" y="1.2" width="17.6" height="2.2" fill="#d0d0d0"/><path d="M0.7 3.6 H19.3" stroke="#444" stroke-width="1.1"/>
<path d="M10 5.8 V14 M6.4 10.6 L10 14.2 L13.6 10.6" fill="none" stroke="#2f93d6" stroke-width="1.4" stroke-linecap="round" stroke-linejoin="round"/></svg>
<svg style="left:1439.8px;top:147.7px;" width="7.100000000000136" height="3.9000000000000057" viewBox="0 0 7.100000000000136 3.9000000000000057"><path d="M0.7 0.5 L3.550000000000068 3.5000000000000058 L6.400000000000136 0.5" fill="none" stroke="#333" stroke-width="1.4" stroke-linecap="round" stroke-linejoin="round"/></svg>
<svg style="left:1412px;top:171px;" width="20" height="20" viewBox="0 0 20 20"><path d="M12.2 1 L19 7.6 L7.6 19 L0.9 12.4 Z" fill="#fff" stroke="#a541b5" stroke-width="1.4" stroke-linejoin="round"/>
<path d="M4.9 8.4 L11.6 15 L7.6 19 L0.9 12.4 Z" fill="#dca0e6" stroke="#a541b5" stroke-width="1.4" stroke-linejoin="round"/></svg>
<svg style="left:1439.8px;top:179.8px;" width="7.100000000000136" height="3.799999999999983" viewBox="0 0 7.100000000000136 3.799999999999983"><path d="M0.7 0.5 L3.550000000000068 3.399999999999983 L6.400000000000136 0.5" fill="none" stroke="#333" stroke-width="1.4" stroke-linecap="round" stroke-linejoin="round"/></svg>
<svg style="left:1476px;top:109px;" width="38" height="34" viewBox="0 0 38 34"><text x="1.6" y="15.4" font-family="Liberation Sans" font-size="20.6" fill="#b9b9b9" textLength="12.6" lengthAdjust="spacingAndGlyphs">A</text>
<text x="1.8" y="33" font-family="Liberation Sans" font-size="20.6" fill="#b9b9b9" textLength="11.2" lengthAdjust="spacingAndGlyphs">Z</text>
<path d="M16.6 9.4 H35.6 V11.2 L28.6 19.6 V27.2 H23.8 V19.6 L16.6 11.2 Z" fill="#ececec" stroke="#b9b9b9" stroke-width="1.4" stroke-linejoin="round"/></svg>
<span style="left:1474.50px;top:150px;font-size:15px;color:#b3b3b3;transform:scaleX(1.0123);">Sort &amp;</span>
<span style="left:1472.60px;top:170px;font-size:15px;color:#b3b3b3;transform:scaleX(0.9567);">Filter</span>
<svg style="left:1509.8px;top:175.8px;" width="6.7999999999999545" height="3.6999999999999886" viewBox="0 0 6.7999999999999545 3.6999999999999886"><path d="M0.7 0.5 L3.3999999999999773 3.2999999999999887 L6.099999999999954 0.5" fill="none" stroke="#c6c6c6" stroke-width="1.4" stroke-linecap="round" stroke-linejoin="round"/></svg>
<svg style="left:1534px;top:107px;" width="40" height="40" viewBox="0 0 40 40"><circle cx="24.4" cy="14.5" r="12.4" fill="#f7f7f7" stroke="#444" stroke-width="1.5"/><path d="M15.6 23.4 L1.6 36.4" stroke="#444" stroke-width="1.6" stroke-linecap="round"/></svg>
<span style="left:1532.00px;top:150px;font-size:15px;color:#242424;transform:scaleX(1.0102);">Find &amp;</span>
<span style="left:1527.00px;top:170px;font-size:15px;color:#242424;transform:scaleX(0.9544);">Select</span>
<svg style="left:1572.2px;top:175.8px;" width="6.7999999999999545" height="3.6999999999999886" viewBox="0 0 6.7999999999999545 3.6999999999999886"><path d="M0.7 0.5 L3.3999999999999773 3.2999999999999887 L6.099999999999954 0.5" fill="none" stroke="#333" stroke-width="1.4" stroke-linecap="round" stroke-linejoin="round"/></svg>
<span style="left:1474.50px;top:204px;font-size:13px;color:#242424;transform:scaleX(0.9786);">Editing</span>
<svg style="left:1625px;top:105px;" width="37" height="40" viewBox="0 0 37 40"><rect x="1.2" y="3.3" width="26.3" height="35.2" fill="#f1f1f1"/>
<path d="M15.5 3.3 H1.2 V38.5 H27.5 V22.3" fill="none" stroke="#c8c8c8" stroke-width="1.7" stroke-linejoin="miter"/>
<g transform="translate(14.5 22) rotate(45)"><rect x="-8.4" y="-3.3" width="16.8" height="6.6" fill="#f6f6f6" stroke="#c2c2c2" stroke-width="1.2"/><rect x="-6" y="-1.1" width="12" height="2.2" fill="#c6c6c6"/></g>
<g transform="translate(25 11) rotate(45)"><path d="M-1.8 -3.3 L-4.4 -9.2 L4.4 -9.2 L1.8 -3.3 Z" fill="#f2f2f2" stroke="#c8c8c8" stroke-width="1.2" stroke-linejoin="round"/>
<rect x="-9.4" y="1.4" width="18.8" height="3.2" fill="#bdbdbd"/><rect x="-9.4" y="-3.3" width="18.8" height="5.6" fill="#f0f0f0" stroke="#c4c4c4" stroke-width="1.3"/></g></svg>
<span style="left:1607.60px;top:151px;font-size:15px;color:#b3b3b3;transform:scaleX(0.9684);">Sensitivity</span>
<svg style="left:1636px;top:175.6px;" width="7" height="3.8000000000000114" viewBox="0 0 7 3.8000000000000114"><path d="M0.7 0.5 L3.5 3.4000000000000115 L6.3 0.5" fill="none" stroke="#c6c6c6" stroke-width="1.4" stroke-linecap="round" stroke-linejoin="round"/></svg>
<span style="left:1611.30px;top:204px;font-size:13px;color:#242424;transform:scaleX(0.9482);">Sensitivity</span>
<svg style="left:1707px;top:108px;" width="37" height="36" viewBox="0 0 37 36"><rect x="1" y="1" width="34.4" height="33.6" fill="#fdf3ee" stroke="#d4653a" stroke-width="1.8"/>
<rect x="4.6" y="4.6" width="11.6" height="11.2" fill="#fff" stroke="#d4653a" stroke-width="1.5"/><rect x="20" y="4.6" width="11.6" height="11.2" fill="#fff" stroke="#d4653a" stroke-width="1.5"/>
<rect x="4.6" y="19.6" width="11.6" height="11.2" fill="#fff" stroke="#d4653a" stroke-width="1.5"/><rect x="20" y="19.6" width="11.6" height="11.2" fill="#fff" stroke="#d4653a" stroke-width="1.5"/></svg>
<span style="left:1699.60px;top:151px;font-size:15px;color:#242424;transform:scaleX(1.0047);">Add-ins</span>
<span style="left:1701.30px;top:204px;font-size:13px;color:#242424;transform:scaleX(1.0073);">Add-ins</span>
<svg style="left:1800px;top:110px;" width="36" height="38" viewBox="0 0 36 38"><path d="M14 30 H6.2 Q2.3 30 2.3 26.2 V4.8 Q2.3 1 6.2 1 H18.4 L25.2 7.8 V17.6" fill="#fff" stroke="#4a7fd0" stroke-width="1.5" stroke-linejoin="round" stroke-linecap="round"/>
<path d="M6.6 20 C9.8 19 12.4 13.4 12.6 9 C12.6 7 10.9 7.2 11.1 9.2 C11.5 12.8 14.6 17 19.2 17.4 C20.8 17.4 20.4 16 18.8 16 C15 15.8 9.8 18 6.6 20 Z" fill="none" stroke="#4a7fd0" stroke-width="1"/>
<g fill="none" stroke="#4a7fd0" stroke-width="1.7"><g transform="translate(28.6 24) rotate(-45)"><rect x="-6" y="-3.5" width="12" height="7" rx="3.5"/></g><g transform="translate(21.6 31) rotate(-45)"><rect x="-6" y="-3.5" width="12" height="7" rx="3.5"/></g></g></svg>
<span style="left:1791.40px;top:151px;font-size:15px;color:#242424;transform:scaleX(0.9327);">Create</span>
<span style="left:1794.20px;top:170px;font-size:15px;color:#242424;transform:scaleX(0.8797);">a PDF</span>
<span style="left:1767.50px;top:204px;font-size:13px;color:#242424;transform:scaleX(1.0352);">Adobe Acrobat</span>
<svg style="left:1886px;top:202.3px;" width="12" height="6" viewBox="0 0 12 6"><path d="M0.7 0.5 L6.0 5.6 L11.3 0.5" fill="none" stroke="#333" stroke-width="1.4" stroke-linecap="round" stroke-linejoin="round"/></svg>
</div></body></html>
